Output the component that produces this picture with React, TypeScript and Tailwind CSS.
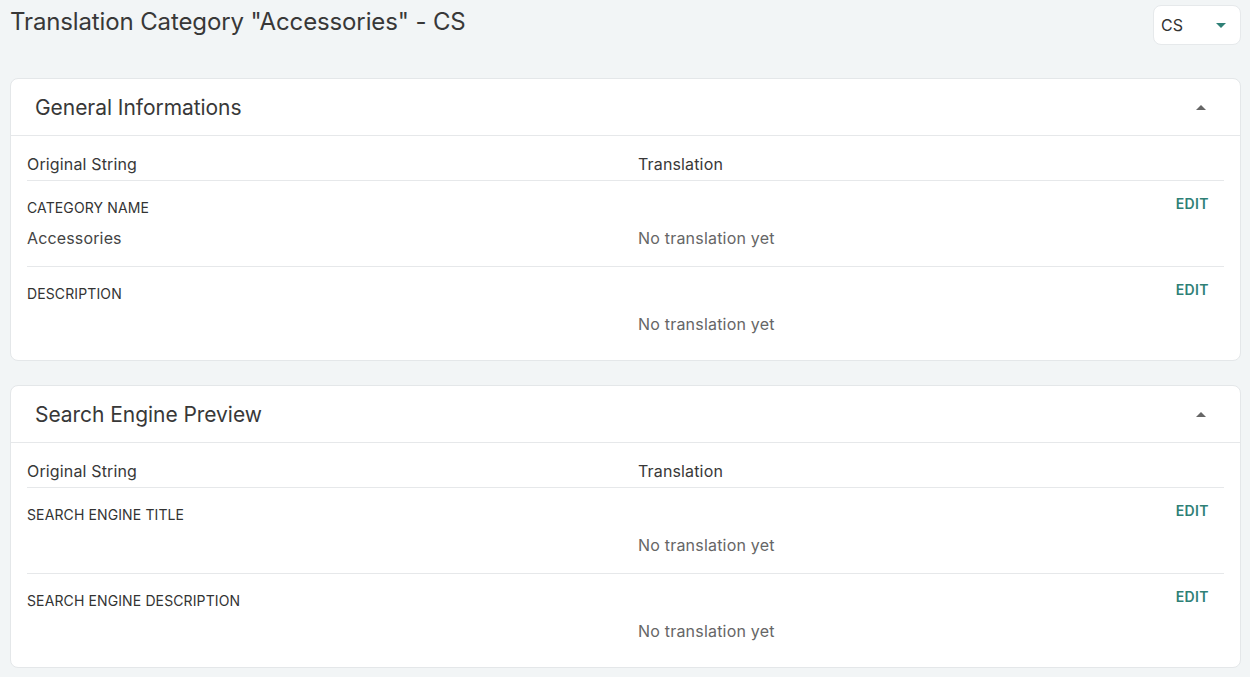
import React from "react";

const Caret = ({ up, color, className }: { up?: boolean; color: string; className?: string }) => (
  <svg width="10" height="5" viewBox="0 0 10 5" className={className}>
    {up ? <path d="M0 5 L5 0 L10 5 Z" fill={color} /> : <path d="M0 0 L5 5 L10 0 Z" fill={color} />}
  </svg>
);

type Row = { label: string; value: string };

const Card = ({ title, rows }: { title: string; rows: Row[] }) => (
  <div className="bg-white border border-[#e4e7e9] rounded-lg">
    <div className="h-[57px] flex items-center justify-between pl-6 pr-[34px] border-b border-[#e6e8ea]">
      <h2 className="pt-[2px] text-[21px] leading-[28px] text-[#383838] tracking-[-0.05px]">{title}</h2>
      <Caret up color="#666" />
    </div>
    <div className="px-4 pt-4 pb-[8px]">
      <div className="flex h-[29px] border-b border-[#e6e8ea] text-[16px] leading-[24px] text-[#383838] tracking-[0.15px]">
        <div className="w-[611px]">Original String</div>
        <div className="flex-1">Translation</div>
      </div>
      {rows.map((r, i) => (
        <div
          key={r.label}
          className={`flex pt-[17px] pb-4 ${i < rows.length - 1 ? "border-b border-[#e6e8ea]" : ""}`}
        >
          <div className="w-[611px] flex flex-col">
            <div className="text-[14px] leading-[20px] font-normal text-[#333] uppercase tracking-[0.12px]">
              {r.label}
            </div>
            <div className="mt-2 h-[24px] text-[16px] leading-[24px] text-[#444] tracking-[0.15px]">{r.value}</div>
          </div>
          <div className="flex-1 flex flex-col">
            <div className="h-[20px] flex justify-end">
              <span className="-mt-[4px] pr-[15px] text-[14px] leading-[20px] font-semibold tracking-[0.4px] text-[#2f8076]">
                EDIT
              </span>
            </div>
            <div className="mt-2 text-[16px] leading-[24px] text-[#666] tracking-[0.2px]">No translation yet</div>
          </div>
        </div>
      ))}
    </div>
  </div>
);

export default function App() {
  return (
    <div className="min-h-screen bg-[#f2f5f6] pl-[10px] pr-[9px] pb-[10px] font-['Inter','Noto_Sans',sans-serif]">
      <div className="flex justify-between items-start pt-[5px]">
        <h1 className="pt-[1px] text-[24px] leading-[32px] text-[#383838] font-normal tracking-[-0.13px]">
          Translation Category "Accessories" - CS
        </h1>
        <div className="w-[88px] h-[40px] bg-white border border-[#e6e9eb] rounded-lg flex items-center justify-between pl-[7px] pr-[14px]">
          <span className="text-[16px] leading-[24px] text-[#333]">CS</span>
          <Caret color="#2f8076" />
        </div>
      </div>
      <div className="mt-[33px] flex flex-col gap-6">
        <Card
          title="General Informations"
          rows={[
            { label: "Category Name", value: "Accessories" },
            { label: "Description", value: "" },
          ]}
        />
        <Card
          title="Search Engine Preview"
          rows={[
            { label: "Search Engine Title", value: "" },
            { label: "Search Engine Description", value: "" },
          ]}
        />
      </div>
    </div>
  );
}
